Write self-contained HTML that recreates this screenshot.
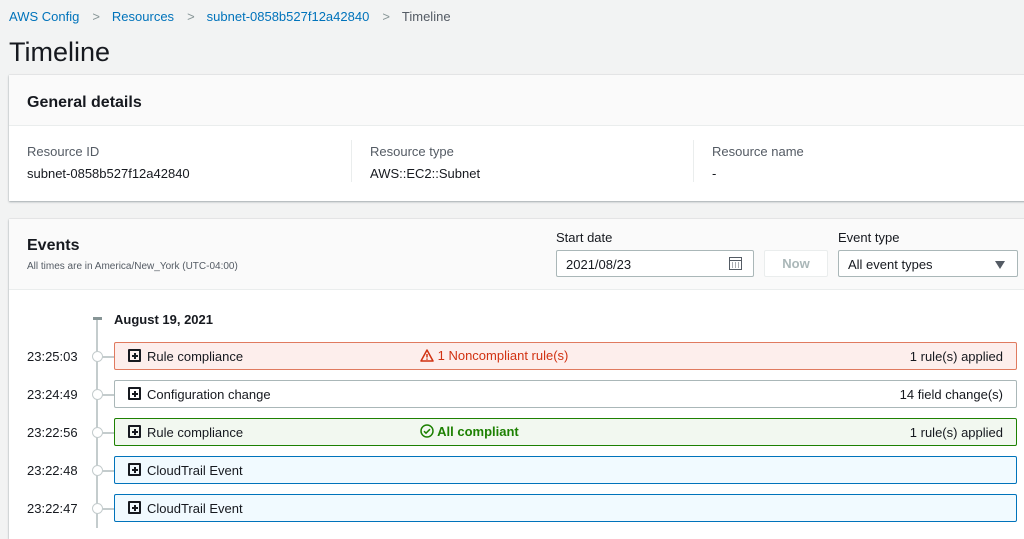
<!DOCTYPE html>
<html><head><meta charset="utf-8"><style>
*{box-sizing:border-box;margin:0;padding:0}
body{width:1024px;height:528px;overflow:hidden;background:#f2f3f3;font-family:"Liberation Sans",Arial,sans-serif;color:#16191f;position:relative;font-size:13px}
.a{position:absolute;white-space:nowrap}
.link{color:#0073bb}
.sep{color:#879596;margin:0 12px 0 13px}
.panel{position:absolute;left:9px;width:1030px;background:#fff;box-shadow:0 1px 2px rgba(0,28,36,.3),0 0 1px rgba(0,28,36,.2)}
.row{position:absolute;left:114px;width:903px;height:28px;border:1px solid #aab7b8;border-radius:2px;background:#fff}
.row .t{position:absolute;left:32px;top:6px;font-size:13px}
.row .r{position:absolute;right:13px;top:6px;font-size:13px}
.plus{position:absolute;left:13px;top:6px;width:13px;height:13px;border:2px solid #16191f;border-radius:1px}
.plus:before{content:"";position:absolute;left:1.5px;top:3.5px;width:6px;height:2px;background:#16191f}
.plus:after{content:"";position:absolute;left:3.5px;top:1.5px;width:2px;height:6px;background:#16191f}
.time{position:absolute;left:27px;font-size:13px}
.dot{position:absolute;left:92px;width:11px;height:11px;border:1.5px solid #c4cccd;border-radius:50%;background:#fff}
.tick{position:absolute;left:102px;width:12px;height:1.5px;background:#c4cccd}
</style></head><body>
<div class="a" style="left:9px;top:9px;font-size:13px"><span class="link">AWS Config</span><span class="sep">&gt;</span><span class="link">Resources</span><span class="sep">&gt;</span><span class="link">subnet-0858b527f12a42840</span><span class="sep">&gt;</span><span style="color:#545b64">Timeline</span></div>
<div class="a" style="left:9px;top:37px;font-size:27px">Timeline</div>

<div class="panel" style="top:75px;height:126px">
 <div style="height:51px;background:#fafafa;border-bottom:1px solid #eaeded"></div>
 <div class="a" style="left:18px;top:19px;font-size:16px;font-weight:bold">General details</div>
 <div class="a" style="left:18px;top:69px;color:#545b64">Resource ID</div>
 <div class="a" style="left:18px;top:91px">subnet-0858b527f12a42840</div>
 <div style="position:absolute;left:342px;top:65px;width:1px;height:42px;background:#eaeded"></div>
 <div class="a" style="left:361px;top:69px;color:#545b64">Resource type</div>
 <div class="a" style="left:361px;top:91px">AWS::EC2::Subnet</div>
 <div style="position:absolute;left:684px;top:65px;width:1px;height:42px;background:#eaeded"></div>
 <div class="a" style="left:703px;top:69px;color:#545b64">Resource name</div>
 <div class="a" style="left:703px;top:91px">-</div>
</div>

<div class="panel" style="top:219px;height:320px">
 <div style="height:71px;background:#fafafa;border-bottom:1px solid #eaeded"></div>
 <div class="a" style="left:18px;top:18px;font-size:16px;font-weight:bold">Events</div>
 <div class="a" style="left:18px;top:42px;font-size:10px;color:#545b64">All times are in America/New_York (UTC-04:00)</div>
 <div class="a" style="left:547px;top:11px">Start date</div>
 <div style="position:absolute;left:547px;top:31px;width:198px;height:27px;border:1px solid #aab7b8;border-radius:2px;background:#fff"><span class="a" style="left:9px;top:6px">2021/08/23</span>
  <svg style="position:absolute;right:11px;top:6px" width="13" height="13" viewBox="0 0 13 13"><rect x="0.5" y="0.5" width="12" height="12" fill="none" stroke="#545b64"/><path d="M1 3.5h11M3 6h1M6 6h1M9 6h1M3 8h1M6 8h1M9 8h1M3 10h1M6 10h1M9 10h1" stroke="#545b64"/></svg></div>
 <div style="position:absolute;left:755px;top:31px;width:64px;height:27px;border:1px solid #eaeded;border-radius:2px;background:#fff;color:#aab7b8;font-weight:bold;text-align:center;line-height:25px">Now</div>
 <div class="a" style="left:829px;top:11px">Event type</div>
 <div style="position:absolute;left:829px;top:31px;width:180px;height:27px;border:1px solid #aab7b8;border-radius:2px;background:#fff"><span class="a" style="left:9px;top:6px">All event types</span><span class="a" style="right:12px;top:10px;width:0;height:0;border-left:5px solid transparent;border-right:5px solid transparent;border-top:8px solid #545b64"></span></div>
</div>

<div style="position:absolute;left:96px;top:318px;width:2px;height:210px;background:#c4cccd"></div>
<div style="position:absolute;left:93px;top:317px;width:9px;height:3px;background:#879596"></div>
<div class="a" style="left:114px;top:312px;font-weight:bold">August 19, 2021</div>

<div class="time" style="top:349px">23:25:03</div><div class="dot" style="top:351px"></div><div class="tick" style="top:356px"></div>
<div class="row" style="top:342px;border-color:#e07a5f;background:#fdeeec"><div class="plus"></div><span class="t">Rule compliance</span>
 <span class="a" style="left:305px;top:5px;color:#d13212"><svg width="14" height="13" viewBox="0 0 14 13" style="vertical-align:-2px"><path d="M7 1L13 12H1Z" fill="none" stroke="#d13212" stroke-width="1.5" stroke-linejoin="round"/><path d="M7 5v3.5M7 9.5v1.2" stroke="#d13212" stroke-width="1.5"/></svg> 1 Noncompliant rule(s)</span><span class="r">1 rule(s) applied</span></div>

<div class="time" style="top:387px">23:24:49</div><div class="dot" style="top:389px"></div><div class="tick" style="top:394px"></div>
<div class="row" style="top:380px"><div class="plus"></div><span class="t">Configuration change</span><span class="r">14 field change(s)</span></div>

<div class="time" style="top:425px">23:22:56</div><div class="dot" style="top:427px"></div><div class="tick" style="top:432px"></div>
<div class="row" style="top:418px;border-color:#1d8102;background:#f2f8f0"><div class="plus"></div><span class="t">Rule compliance</span>
 <span class="a" style="left:305px;top:5px;color:#1d8102;font-weight:bold"><svg width="14" height="14" viewBox="0 0 14 14" style="vertical-align:-2px"><circle cx="7" cy="7" r="6" fill="none" stroke="#1d8102" stroke-width="1.5"/><path d="M4 7.2l2 2 4-4" fill="none" stroke="#1d8102" stroke-width="1.5"/></svg> All compliant</span><span class="r">1 rule(s) applied</span></div>

<div class="time" style="top:463px">23:22:48</div><div class="dot" style="top:465px"></div><div class="tick" style="top:470px"></div>
<div class="row" style="top:456px;border-color:#0073bb;background:#f1faff"><div class="plus"></div><span class="t">CloudTrail Event</span></div>

<div class="time" style="top:501px">23:22:47</div><div class="dot" style="top:503px"></div><div class="tick" style="top:508px"></div>
<div class="row" style="top:494px;border-color:#0073bb;background:#f1faff"><div class="plus"></div><span class="t">CloudTrail Event</span></div>
</body></html>
